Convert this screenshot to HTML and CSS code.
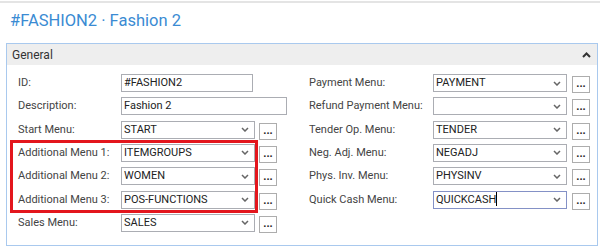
FILE: index.html
```html
<!DOCTYPE html>
<html lang="en">
<head>
  <meta charset="UTF-8">
  <title>#FASHION2 · Fashion 2</title>
  <link rel="stylesheet" href="styles.css">
</head>
<body>
  <div class="topline"></div>
  <h1 class="title">#FASHION2 · Fashion 2</h1>

  <section class="panel">
    <header class="panel-head">
      <span>General</span>
      <svg class="collapse" width="9" height="6" viewBox="0 0 9 6"><polyline points="1,5 4.5,1.5 8,5"/></svg>
    </header>

    <div class="panel-body">
      <div class="col col-left">
        <div class="row">
          <label>ID:</label>
          <div class="field w-id">#FASHION2</div>
        </div>
        <div class="row">
          <label>Description:</label>
          <div class="field w-desc">Fashion 2</div>
        </div>
        <div class="row">
          <label>Start Menu:</label>
          <div class="field select"><span>START</span><svg class="chev" width="8" height="5" viewBox="0 0 8 5"><polyline points="1,1 4,4 7,1"/></svg></div>
          <button class="more">...</button>
        </div>

        <div class="marked">
          <div class="row">
            <label>Additional Menu 1:</label>
            <div class="field select"><span>ITEMGROUPS</span><svg class="chev" width="8" height="5" viewBox="0 0 8 5"><polyline points="1,1 4,4 7,1"/></svg></div>
            <button class="more">...</button>
          </div>
          <div class="row">
            <label>Additional Menu 2:</label>
            <div class="field select"><span>WOMEN</span><svg class="chev" width="8" height="5" viewBox="0 0 8 5"><polyline points="1,1 4,4 7,1"/></svg></div>
            <button class="more">...</button>
          </div>
          <div class="row">
            <label>Additional Menu 3:</label>
            <div class="field select"><span>POS-FUNCTIONS</span><svg class="chev" width="8" height="5" viewBox="0 0 8 5"><polyline points="1,1 4,4 7,1"/></svg></div>
            <button class="more">...</button>
          </div>
        </div>

        <div class="row">
          <label>Sales Menu:</label>
          <div class="field select"><span>SALES</span><svg class="chev" width="8" height="5" viewBox="0 0 8 5"><polyline points="1,1 4,4 7,1"/></svg></div>
          <button class="more">...</button>
        </div>
      </div>

      <div class="col col-right">
        <div class="row">
          <label>Payment Menu:</label>
          <div class="field select"><span>PAYMENT</span><svg class="chev" width="8" height="5" viewBox="0 0 8 5"><polyline points="1,1 4,4 7,1"/></svg></div>
          <button class="more">...</button>
        </div>
        <div class="row">
          <label>Refund Payment Menu:</label>
          <div class="field select"><span></span><svg class="chev" width="8" height="5" viewBox="0 0 8 5"><polyline points="1,1 4,4 7,1"/></svg></div>
          <button class="more">...</button>
        </div>
        <div class="row">
          <label>Tender Op. Menu:</label>
          <div class="field select"><span>TENDER</span><svg class="chev" width="8" height="5" viewBox="0 0 8 5"><polyline points="1,1 4,4 7,1"/></svg></div>
          <button class="more">...</button>
        </div>
        <div class="row">
          <label>Neg. Adj. Menu:</label>
          <div class="field select"><span>NEGADJ</span><svg class="chev" width="8" height="5" viewBox="0 0 8 5"><polyline points="1,1 4,4 7,1"/></svg></div>
          <button class="more">...</button>
        </div>
        <div class="row">
          <label>Phys. Inv. Menu:</label>
          <div class="field select"><span>PHYSINV</span><svg class="chev" width="8" height="5" viewBox="0 0 8 5"><polyline points="1,1 4,4 7,1"/></svg></div>
          <button class="more">...</button>
        </div>
        <div class="row">
          <label>Quick Cash Menu:</label>
          <div class="field select focused"><span>QUICKCASH<i class="caret"></i></span><svg class="chev" width="8" height="5" viewBox="0 0 8 5"><polyline points="1,1 4,4 7,1"/></svg></div>
          <button class="more">...</button>
        </div>
      </div>
    </div>
  </section>
</body>
</html>
```

FILE: styles.css
```css
body {
  margin: 0;
  font-family: Roboto, "Open Sans", Arial, sans-serif;
  font-size: 11px;
  color: #444;
  background: #fff;
}
.topline {
  margin-top: 1px;
  height: 2px;
  background: #e4e4e4;
}
.title {
  margin: 7px 0 11px 10px;
  font-size: 16.5px;
  line-height: 22px;
  font-weight: normal;
  color: #3a8bd3;
}
.panel {
  margin: 0 2px 0 6px;
  height: 203px;
  box-sizing: border-box;
  border: 1px solid #a9c9ee;
}
.panel-head {
  height: 21px;
  background: #eeeeee;
  display: flex;
  align-items: center;
  justify-content: space-between;
  padding: 0 6px 0 5px;
  font-size: 12px;
  color: #333;
}
.collapse polyline {
  fill: none;
  stroke: #333;
  stroke-width: 2;
}
.panel-body {
  display: flex;
  padding: 9px 0 0 11px;
}
.col {
  display: flex;
  flex-direction: column;
  gap: 5.33px;
}
.col-left {
  width: 291px;
}
.row {
  display: flex;
  align-items: flex-start;
  height: 18px;
}
.row label {
  flex: none;
  width: 103px;
  line-height: 18px;
  white-space: nowrap;
}
.col-right .row label {
  width: 124px;
}
.field {
  box-sizing: border-box;
  height: 18px;
  border: 1px solid #abadb3;
  padding: 0 2px;
  line-height: 16px;
  color: #222;
  display: flex;
  align-items: center;
  white-space: nowrap;
}
.w-id {
  width: 132px;
}
.w-desc {
  width: 166px;
}
.select {
  width: 134px;
  justify-content: space-between;
}
.chev {
  margin-right: 3px;
}
.chev polyline {
  fill: none;
  stroke: #666;
  stroke-width: 1.5;
}
.focused {
  border-color: #8491c6;
}
.caret {
  display: inline-block;
  width: 1px;
  height: 14px;
  background: #000;
  vertical-align: -3px;
}
.more {
  box-sizing: border-box;
  width: 18px;
  height: 17px;
  margin: 2px 0 0 4px;
  padding: 0 0 3px;
  border: 1px solid #adadad;
  background: #fff;
  font-family: inherit;
  font-size: 11px;
  font-weight: bold;
  line-height: 1;
  color: #222;
  display: flex;
  align-items: flex-end;
  justify-content: center;
}
.col-right .more {
  margin-left: 5px;
}
.marked {
  position: relative;
  display: flex;
  flex-direction: column;
  gap: 5.33px;
}
.marked::after {
  content: "";
  position: absolute;
  left: -8px;
  top: -4px;
  right: 51px;
  bottom: -4px;
  border: 3px solid #e3161d;
  pointer-events: none;
}
```
